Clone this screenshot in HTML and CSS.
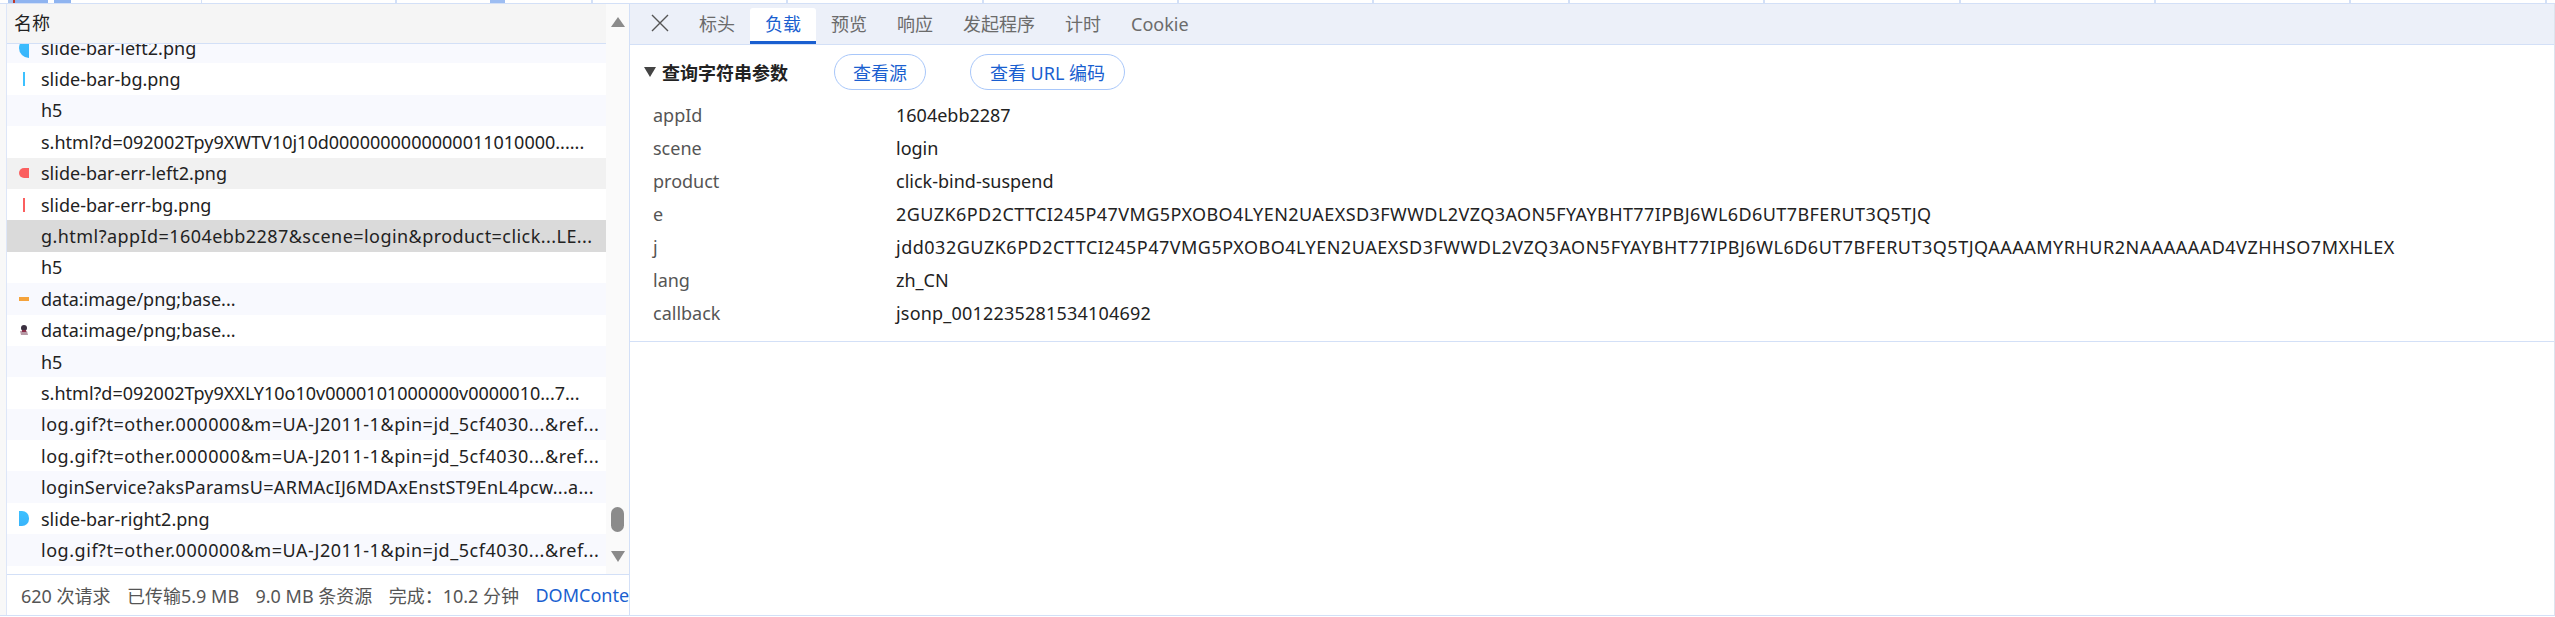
FILE: index.html
```html
<!DOCTYPE html>
<html lang="en">
<head>
  <meta charset="UTF-8">
  <title>Network</title>
  <link rel="stylesheet" href="styles.css">
</head>
<body>

  <div class="timeline">
    <div class="marks"><span class="mark-a"></span></div>
    <div class="tick"></div><div class="tick"></div><div class="tick"></div><div class="tick"></div>
    <div class="tick"></div><div class="tick"></div><div class="tick"></div><div class="tick"></div>
    <div class="tick"></div><div class="tick"></div><div class="tick"></div><div class="tick"></div>
    <div class="tick"></div>
  </div>

  <div class="main">
    <div class="gutter"></div>

    <div class="requests">
      <div class="list-area">
        <div class="list-col">
          <div class="name-head">名称</div>
          <div class="list">
            <div class="rows">
              <div class="row tint"><i class="ic ic-left blue"></i><span>slide-bar-left2.png</span></div>
              <div class="row"><i class="ic ic-line blue"></i><span>slide-bar-bg.png</span></div>
              <div class="row tint"><i class="ic"></i><span>h5</span></div>
              <div class="row"><i class="ic"></i><span>s.html?d=092002Tpy9XWTV10j10d0000000000000011010000......</span></div>
              <div class="row hover"><i class="ic ic-err-left"></i><span>slide-bar-err-left2.png</span></div>
              <div class="row"><i class="ic ic-line red"></i><span>slide-bar-err-bg.png</span></div>
              <div class="row selected"><i class="ic"></i><span class="sp-g">g.html?appId=1604ebb2287&amp;scene=login&amp;product=click...LE...</span></div>
              <div class="row"><i class="ic"></i><span>h5</span></div>
              <div class="row tint"><i class="ic ic-orange"></i><span>data:image/png;base...</span></div>
              <div class="row">
                <i class="ic ic-svg">
                  <svg width="10" height="11" viewBox="0 0 10 11">
                    <circle cx="5" cy="3" r="3" fill="#3b3040"/>
                    <path d="M1 6h7l1 4H2z" fill="#b79aa6"/>
                    <path d="M3 5h4v2H3z" fill="#8a2f4a"/>
                  </svg>
                </i>
                <span>data:image/png;base...</span>
              </div>
              <div class="row tint"><i class="ic"></i><span>h5</span></div>
              <div class="row"><i class="ic"></i><span>s.html?d=092002Tpy9XXLY10o10v0000101000000v0000010...7...</span></div>
              <div class="row tint"><i class="ic"></i><span class="sp-log">log.gif?t=other.000000&amp;m=UA-J2011-1&amp;pin=jd_5cf4030...&amp;ref...</span></div>
              <div class="row"><i class="ic"></i><span class="sp-log">log.gif?t=other.000000&amp;m=UA-J2011-1&amp;pin=jd_5cf4030...&amp;ref...</span></div>
              <div class="row tint"><i class="ic"></i><span class="sp-login">loginService?aksParamsU=ARMAcIJ6MDAxEnstST9EnL4pcw...a...</span></div>
              <div class="row"><i class="ic ic-right blue"></i><span>slide-bar-right2.png</span></div>
              <div class="row tint"><i class="ic"></i><span class="sp-log">log.gif?t=other.000000&amp;m=UA-J2011-1&amp;pin=jd_5cf4030...&amp;ref...</span></div>
            </div>
          </div>
        </div>
        <div class="scrollbar">
          <span class="arrow-up"></span>
          <span class="thumb"></span>
          <span class="arrow-down"></span>
        </div>
      </div>
      <div class="summary">
        <span>620 次请求</span>
        <span>已传输5.9 MB</span>
        <span>9.0 MB 条资源</span>
        <span>完成：10.2 分钟</span>
        <span class="dom">DOMContentLoaded</span>
      </div>
    </div>

    <div class="detail">
      <div class="tabs">
        <svg class="close" width="18" height="18" viewBox="0 0 18 18">
          <path d="M1 1l16 16M17 1L1 17" stroke="#555" stroke-width="1.4" fill="none"/>
        </svg>
        <div class="tab">标头</div>
        <div class="tab active">负载</div>
        <div class="tab">预览</div>
        <div class="tab">响应</div>
        <div class="tab">发起程序</div>
        <div class="tab">计时</div>
        <div class="tab">Cookie</div>
      </div>

      <div class="section">
        <div class="section-head">
          <span class="tri"></span>
          <strong class="section-title">查询字符串参数</strong>
          <button class="pill pill-src">查看源</button>
          <button class="pill pill-url">查看 URL 编码</button>
        </div>
        <div class="params">
          <div class="key">appId</div><div class="val">1604ebb2287</div>
          <div class="key">scene</div><div class="val">login</div>
          <div class="key">product</div><div class="val">click-bind-suspend</div>
          <div class="key">e</div><div class="val val-e">2GUZK6PD2CTTCI245P47VMG5PXOBO4LYEN2UAEXSD3FWWDL2VZQ3AON5FYAYBHT77IPBJ6WL6D6UT7BFERUT3Q5TJQ</div>
          <div class="key">j</div><div class="val val-j">jdd032GUZK6PD2CTTCI245P47VMG5PXOBO4LYEN2UAEXSD3FWWDL2VZQ3AON5FYAYBHT77IPBJ6WL6D6UT7BFERUT3Q5TJQAAAAMYRHUR2NAAAAAAD4VZHHSO7MXHLEX</div>
          <div class="key">lang</div><div class="val">zh_CN</div>
          <div class="key">callback</div><div class="val val-cb">jsonp_0012235281534104692</div>
        </div>
      </div>
    </div>
  </div>

</body>
</html>
```

FILE: styles.css
```css
html, body {
  margin: 0;
  height: 100%;
  overflow: hidden;
}

body {
  font-family: "Noto Sans", "Noto Sans CJK SC", sans-serif;
  font-size: 18px;
  color: #222;
  background-color: #fff;
}

.timeline {
  display: flex;
  height: 3px;
  border-bottom: 1px solid #d3e0f7;
  overflow: hidden;
}

.marks {
  display: flex;
  flex: none;
  width: 202px;
  padding-left: 8px;
  box-sizing: border-box;
  border-right: 1px solid #d3e0f7;
}

.mark-a {
  width: 63px;
  height: 3px;
  background: linear-gradient(to right, #a9c4ee 5px, #c0392b 5px, #c0392b 7px, #8fb4f0 7px, #8fb4f0 40px, #fff 40px, #fff 46px, #8fb4f0 46px);
}

.tick {
  flex: none;
  width: 195.4px;
  box-sizing: border-box;
  border-right: 2px solid #d3e0f7;
}

.tick:nth-child(3) {
  background: linear-gradient(to right, #fff 93px, #9dbdf2 93px, #9dbdf2 108px, #fff 108px);
}

.main {
  display: flex;
  height: 611px;
  border-bottom: 1px solid #d3e0f7;
}

.gutter {
  flex: none;
  width: 6px;
  background-color: #f8f8f8;
  border-right: 1px solid #dde6f8;
}

.requests {
  flex: none;
  width: 622px;
  display: flex;
  flex-direction: column;
  border-right: 1px solid #d3e0f7;
}

.list-area {
  flex: 1;
  display: flex;
  min-height: 0;
}

.list-col {
  flex: none;
  width: 599px;
  display: flex;
  flex-direction: column;
}

.name-head {
  flex: none;
  height: 39px;
  line-height: 39px;
  padding-left: 7px;
  background-color: #f5f5f5;
  border-bottom: 1px solid #d3e0f7;
}

.list {
  flex: 1;
  overflow: hidden;
}

.rows {
  margin-top: -12px;
}

.row {
  display: flex;
  align-items: center;
  height: 31.4px;
  white-space: nowrap;
}

.tint {
  background-color: #f8f9fe;
}

.hover {
  background-color: #f1f1f1;
}

.selected {
  background-color: #dadada;
}

.sp-g {
  letter-spacing: 0.44px;
}

.sp-log {
  letter-spacing: 0.54px;
}

.sp-login {
  letter-spacing: 0.3px;
}

.ic {
  flex: none;
  display: flex;
  align-items: center;
  width: 10px;
  margin-left: 12px;
  margin-right: 12px;
}

.ic-left,
.ic-right {
  height: 20px;
  background: linear-gradient(to bottom, #3dc1ff, #39b4fb);
}

.ic-left {
  border-radius: 10px 0 0 10px;
}

.ic-right {
  height: 15px;
  border-radius: 0 7px 7px 0;
}

.ic-line {
  width: 2px;
  height: 14px;
  margin-left: 16px;
  margin-right: 16px;
}

.blue {
  background-color: #3dc1ff;
}

.red {
  background-color: #fb5f5f;
}

.ic-err-left {
  height: 10px;
  background-color: #fb5f5f;
  border-radius: 5px 0 0 5px;
}

.ic-orange {
  height: 4px;
  background-color: #f5a33b;
}

.scrollbar {
  flex: 1;
  position: relative;
  display: flex;
  flex-direction: column;
  align-items: center;
  background-color: #fafafa;
}

.arrow-up {
  margin-top: 13px;
  border-left: 7px solid transparent;
  border-right: 7px solid transparent;
  border-bottom: 10px solid #8b8b8b;
}

.thumb {
  width: 13px;
  height: 25px;
  margin-top: auto;
  border-radius: 7px;
  background-color: #8b8b8b;
}

.arrow-down {
  margin-top: 19px;
  margin-bottom: 12px;
  border-left: 7px solid transparent;
  border-right: 7px solid transparent;
  border-top: 11px solid #8b8b8b;
}

.summary {
  flex: none;
  height: 40px;
  display: flex;
  align-items: center;
  gap: 16.4px;
  padding-left: 14px;
  border-top: 1px solid #d3e0f7;
  color: #555;
  white-space: nowrap;
  overflow: hidden;
}

.dom {
  color: #1a5fd0;
}

.detail {
  flex: 1;
  min-width: 0;
  border-right: 1px solid #dde3ee;
}

.tabs {
  display: flex;
  align-items: flex-end;
  height: 40px;
  background-color: #ecf0f9;
  border-bottom: 1px solid #d3e0f7;
}

.close {
  align-self: flex-start;
  margin: 10px 15px 0 21px;
}

.tab {
  height: 36px;
  line-height: 32px;
  padding: 0 15px;
  color: #6b6b6b;
  box-sizing: border-box;
}

.tab.active {
  background-color: #fff;
  color: #1a5fd0;
  border-bottom: 3px solid #1a5fd0;
  border-radius: 3px 3px 0 0;
}

.section {
  height: 296px;
  border-bottom: 1px solid #d3e0f7;
}

.section-head {
  display: flex;
  align-items: center;
  height: 36px;
  padding: 9px 0 0 14px;
}

.tri {
  width: 0;
  height: 0;
  border-left: 6px solid transparent;
  border-right: 6px solid transparent;
  border-top: 10px solid #444;
  margin-right: 6px;
}

.section-title {
  font-weight: bold;
  color: #222;
}

.pill {
  height: 36px;
  padding: 0;
  font: inherit;
  color: #1a5fd0;
  background-color: #fff;
  border: 1px solid #a8c7fa;
  border-radius: 18px;
}

.pill-src {
  width: 92px;
  margin-left: 46px;
}

.pill-url {
  width: 155px;
  margin-left: 44px;
}

.params {
  display: grid;
  grid-template-columns: 243px 1fr;
  grid-auto-rows: 33px;
  align-items: center;
  padding: 8px 0 0 23px;
}

.key {
  color: #555;
}

.val {
  color: #222;
  white-space: nowrap;
}

.val-e {
  letter-spacing: 0.42px;
}

.val-j {
  letter-spacing: 0.5px;
}

.val-cb {
  letter-spacing: 0.2px;
}
```
